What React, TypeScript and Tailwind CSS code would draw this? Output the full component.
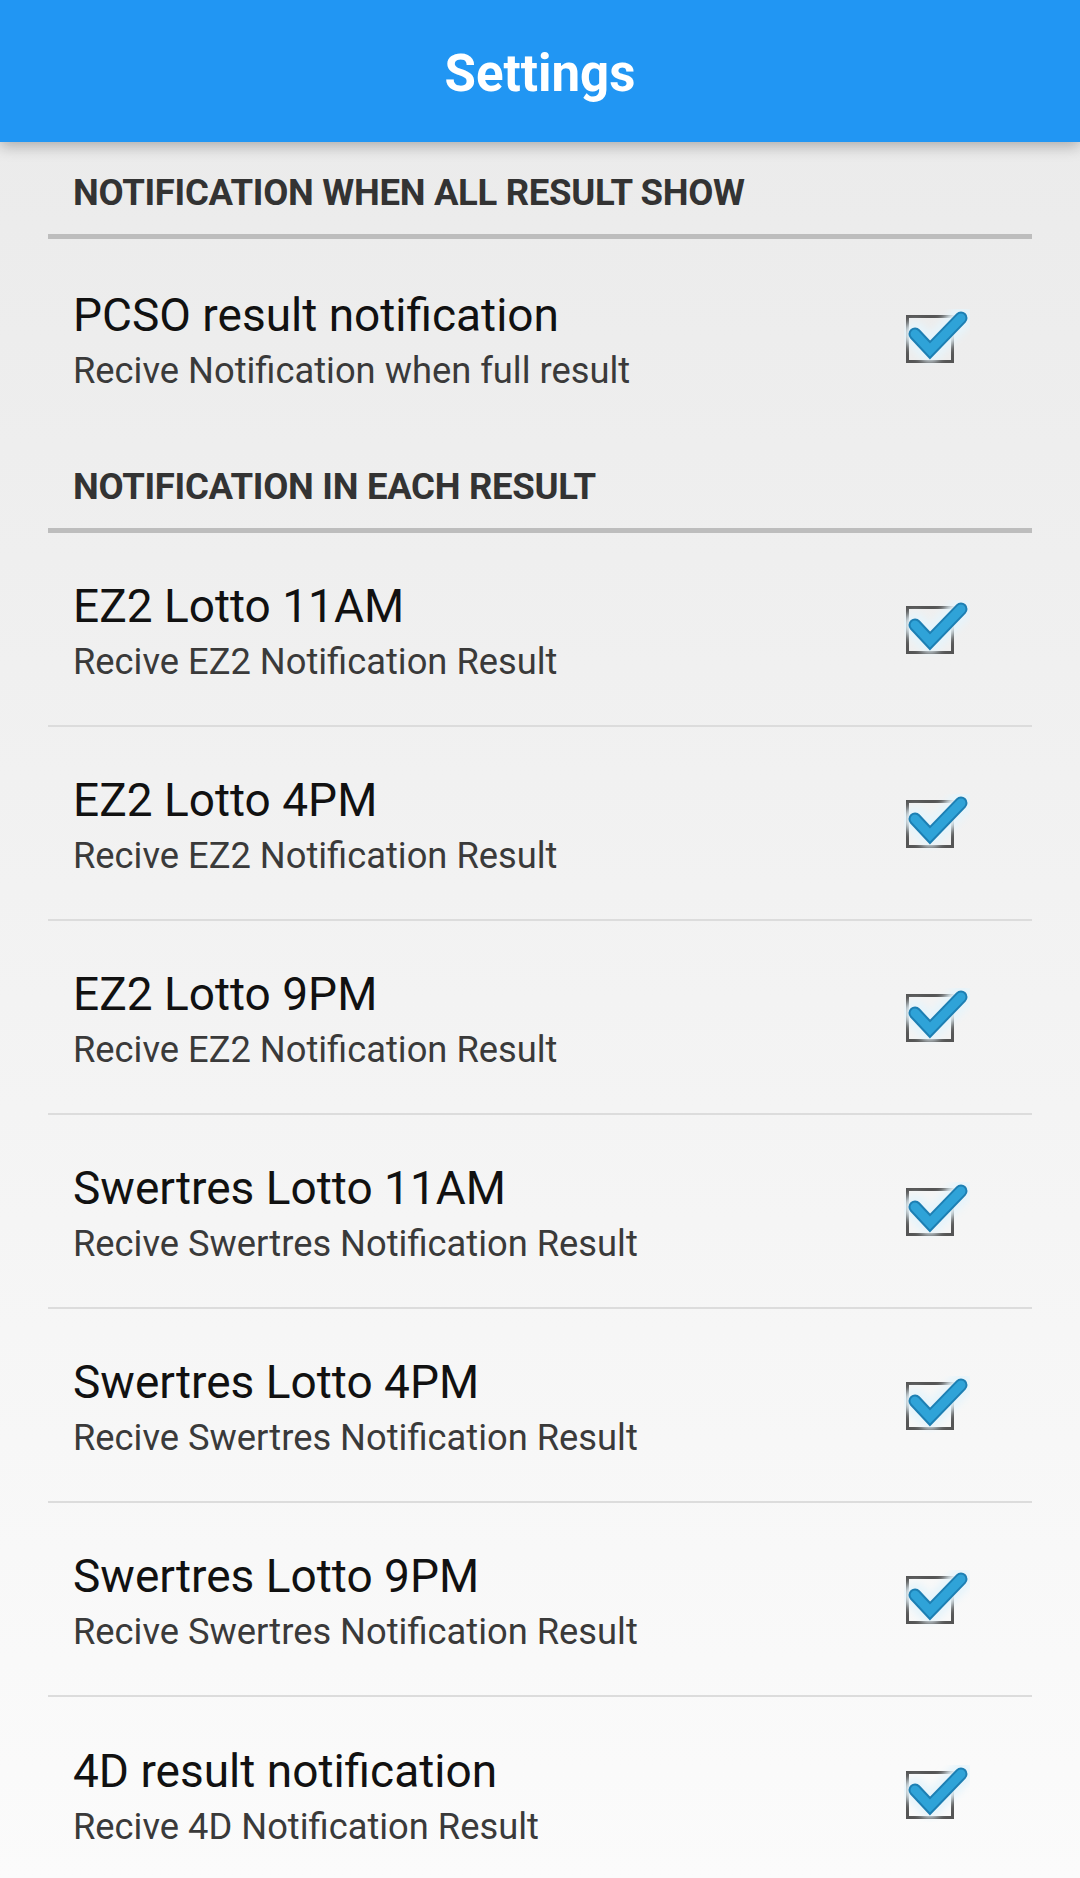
import React from "react";

function Check() {
  return (
    <svg width="66" height="58" viewBox="0 0 66 58" className="block">
      <defs>
        <filter id="glow" x="-50%" y="-50%" width="200%" height="200%">
          <feGaussianBlur stdDeviation="3.5" />
        </filter>
      </defs>
      <rect x="3.5" y="7.5" width="45" height="45" fill="none" stroke="#555555" strokeWidth="3" />
      <polyline
        points="11,25 26,41 57,9"
        fill="none"
        stroke="#e6f4fb"
        strokeWidth="24"
        strokeLinecap="round"
        strokeLinejoin="round"
        filter="url(#glow)"
      />
      <polyline
        points="11,25 26,41 57,9"
        fill="none"
        stroke="#1d7fb3"
        strokeWidth="13"
        strokeLinecap="round"
        strokeLinejoin="miter"
      />
      <polyline
        points="11,25 26,41 57,9"
        fill="none"
        stroke="#2fa3d8"
        strokeWidth="9"
        strokeLinecap="round"
        strokeLinejoin="miter"
      />
    </svg>
  );
}

function Category({ label }: { label: string }) {
  return (
    <div>
      <div className="h-[92px] flex items-center pt-[10px] pl-[25px]">
        <span className="text-[36.5px] font-bold text-[#333333] tracking-[-0.3px]">{label}</span>
      </div>
      <div className="h-[5px] bg-[#bdbdbd]" />
    </div>
  );
}

function Row({ title, sub, border, tall }: { title: string; sub: string; border: boolean; tall?: boolean }) {
  return (
    <div
      className={`${tall ? "h-[197px]" : "h-[194px]"} flex items-center justify-between ${
        border ? "border-b-2 border-[#dcdcdc]" : ""
      }`}
    >
      <div className="pl-[25px] pt-[6px] flex flex-col gap-[8px]">
        <div className="text-[46px] leading-[52px] text-[#111111]">{title}</div>
        <div className="text-[36.3px] leading-[44px] text-[#3a3a3a]">{sub}</div>
      </div>
      <div className="pr-[62px]">
        <Check />
      </div>
    </div>
  );
}

export default function App() {
  const rows = [
    ["EZ2 Lotto 11AM", "Recive EZ2 Notification Result"],
    ["EZ2 Lotto 4PM", "Recive EZ2 Notification Result"],
    ["EZ2 Lotto 9PM", "Recive EZ2 Notification Result"],
    ["Swertres Lotto 11AM", "Recive Swertres Notification Result"],
    ["Swertres Lotto 4PM", "Recive Swertres Notification Result"],
    ["Swertres Lotto 9PM", "Recive Swertres Notification Result"],
    ["4D result notification", "Recive 4D Notification Result"],
  ];
  return (
    <div className="w-[1080px] h-[1878px] overflow-hidden bg-gradient-to-b from-[#eaeaea] to-[#fbfbfb] font-['Roboto',sans-serif]">
      <header className="relative z-10 h-[142px] bg-[#2196f3] flex items-center justify-center pt-[6px] shadow-[0_4px_14px_rgba(0,0,0,0.28)]">
        <h1 className="text-white text-[51px] font-bold">Settings</h1>
      </header>
      <div className="mx-[48px]">
        <Category label="NOTIFICATION WHEN ALL RESULT SHOW" />
        <Row title="PCSO result notification" sub="Recive Notification when full result" border={false} tall />
        <Category label="NOTIFICATION IN EACH RESULT" />
        {rows.map((r, i) => (
          <Row key={i} title={r[0]} sub={r[1]} border={i < rows.length - 1} />
        ))}
      </div>
    </div>
  );
}
